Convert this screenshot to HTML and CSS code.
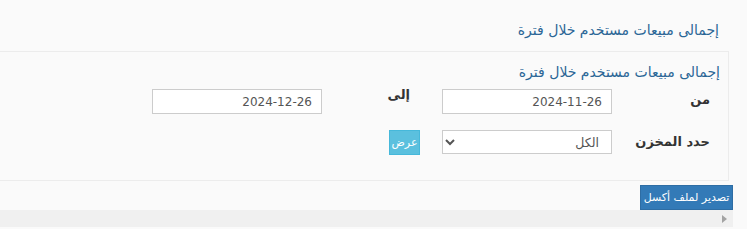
FILE: index.html
```html
<!DOCTYPE html>
<html lang="ar" dir="rtl">
<head>
<meta charset="utf-8">
<link rel="stylesheet" href="styles.css">
</head>
<body>
<div class="page">
  <h3 class="page-title">إجمالى مبيعات مستخدم خلال فترة</h3>
  <div class="panel">
    <h4 class="panel-title">إجمالى مبيعات مستخدم خلال فترة</h4>
    <div class="form-grid">
      <label class="lbl lbl-from">من</label>
      <input class="field" type="text" value="2024-11-26">
      <span class="spacer"></span>
      <label class="lbl lbl-to">إلى</label>
      <input class="field" type="text" value="2024-12-26">

      <label class="lbl lbl-store">حدد المخزن</label>
      <div class="select-wrap">
        <select class="field select"><option>الكل</option></select>
      </div>
      <span class="spacer"></span>
      <div class="btn-cell"><button class="btn-show">عرض</button></div>
    </div>
  </div>
  <div class="actions">
    <button class="btn-export">تصدير لملف أكسل</button>
  </div>
  <div class="hbar">
    <svg class="arrow" width="5" height="8" viewBox="0 0 5 8"><path d="M0 0 L5 4 L0 8 Z" fill="#a3a3a3"/></svg>
  </div>
</div>
</body>
</html>
```

FILE: styles.css
```css
html, body {
  margin: 0;
  padding: 0;
  background: #fafafa;
}
body {
  font-family: "DejaVu Sans", "Noto Sans", sans-serif;
  font-size: 13px;
  color: #333;
  overflow: hidden;
}
.page {
  width: 733px;
  margin-left: 0;
  margin-right: auto;
  direction: rtl;
}
.page-title {
  margin: 0;
  padding: 21px 14px 0 0;
  height: 51px;
  box-sizing: border-box;
  font-size: 14px;
  font-weight: normal;
  color: #2b6696;
  line-height: 18px;
}
.panel {
  margin: 0 4px 0 -20px;
  border: 1px solid #ececec;
  height: 130px;
  box-sizing: border-box;
  padding: 11px 8px 0 0;
}
.panel-title {
  margin: 0;
  font-size: 14px;
  font-weight: normal;
  color: #2b6696;
  line-height: 18px;
  height: 26px;
}
.form-grid {
  display: grid;
  grid-template-columns: 108px 170px 22px 98px 170px;
  grid-template-rows: 25px 25px;
  row-gap: 16px;
  justify-content: start;
}
.lbl {
  font-weight: bold;
  font-size: 13px;
  color: #333;
  padding-right: 10px;
  line-height: 16px;
}
.lbl-from { padding-top: 3px; }
.lbl-to { padding-top: 0; margin-top: -2px; }
.lbl-store { padding-top: 4px; }
.field {
  box-sizing: border-box;
  width: 170px;
  height: 25px;
  border: 1px solid #ccc;
  background: #fff;
  font-family: "DejaVu Sans", sans-serif;
  font-size: 12px;
  color: #555;
  padding: 0 9px;
  direction: rtl;
  margin: 0;
  outline: none;
}
.select-wrap { height: 24px; }
.select {
  height: 24px;
  padding: 0 8px;
  font-size: 12.5px;
}
.btn-cell {
  display: flex;
  align-items: flex-start;
}
.btn-show {
  width: 31px;
  height: 25px;
  background: #5bc0de;
  border: 1px solid #46b8da;
  color: #fff;
  font-family: "DejaVu Sans", sans-serif;
  font-size: 11px;
  padding: 0;
  margin: 0;
}
.actions {
  display: flex;
  justify-content: flex-start;
  padding-top: 4px;
  height: 25px;
}
.btn-export {
  width: 93px;
  height: 25px;
  background: #337ab7;
  border: 1px solid #2e6da4;
  color: #fff;
  font-family: "DejaVu Sans", sans-serif;
  font-size: 11px;
  padding: 0;
  margin: 0;
  white-space: nowrap;
}
.hbar {
  height: 17px;
  background: #f0f0f0;
  display: flex;
  align-items: center;
  padding-right: 6px;
}
.arrow { display: block; }
```
